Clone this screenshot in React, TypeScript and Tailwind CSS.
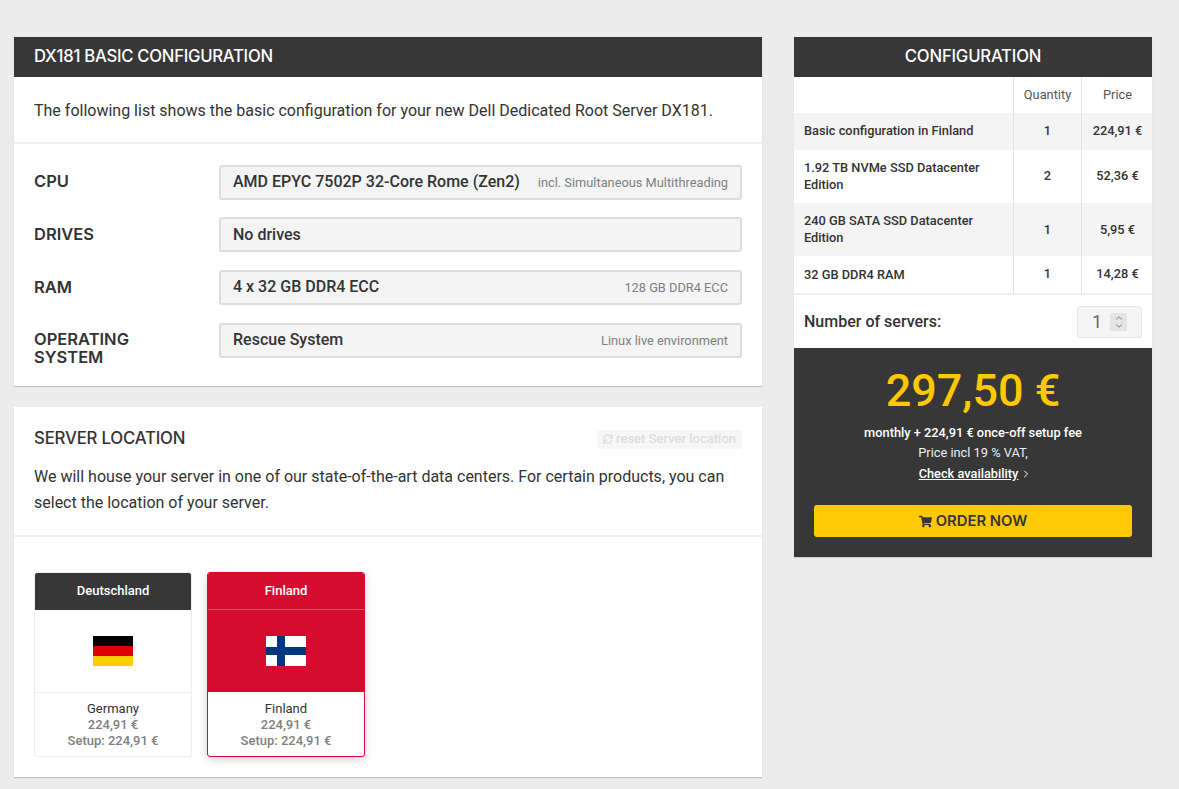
import { ChevronDown, ChevronRight, ChevronUp } from "lucide-react";
import { FaShoppingCart, FaSync } from "react-icons/fa";

const heading = "font-['Inter','Liberation_Sans',sans-serif]";

const specs = [
  { label: ["CPU"], value: "AMD EPYC 7502P 32-Core Rome (Zen2)", note: "incl. Simultaneous Multithreading" },
  { label: ["DRIVES"], value: "No drives", note: "" },
  { label: ["RAM"], value: "4 x 32 GB DDR4 ECC", note: "128 GB DDR4 ECC" },
  { label: ["OPERATING", "SYSTEM"], value: "Rescue System", note: "Linux live environment" },
];

const lines = [
  { name: "Basic configuration in Finland", qty: "1", price: "224,91 €", height: "h-[37px]", namePad: "pb-[2px]", cellPad: "pb-[2px]", shaded: true },
  { name: "1.92 TB NVMe SSD Datacenter Edition", qty: "2", price: "52,36 €", height: "h-[53px]", namePad: "pb-[1px]", cellPad: "pb-[1px]", shaded: false },
  { name: "240 GB SATA SSD Datacenter Edition", qty: "1", price: "5,95 €", height: "h-[53px]", namePad: "pb-[1px]", cellPad: "pb-0", shaded: true },
  { name: "32 GB DDR4 RAM", qty: "1", price: "14,28 €", height: "h-[37px]", namePad: "pb-[1px]", cellPad: "pb-[1px]", shaded: false },
];

const GermanFlag = () => (
  <svg width="40" height="30" viewBox="0 0 40 30" aria-hidden="true">
    <rect width="40" height="10" fill="#000000" />
    <rect y="10" width="40" height="10" fill="#dd0000" />
    <rect y="20" width="40" height="10" fill="#ffce00" />
  </svg>
);

const FinnishFlag = () => (
  <svg width="40" height="30" viewBox="0 0 40 30" aria-hidden="true">
    <rect width="40" height="30" fill="#ffffff" />
    <rect x="11" width="8" height="30" fill="#003580" />
    <rect y="11" width="40" height="8" fill="#003580" />
  </svg>
);

const App = () => {
  return (
    <div className="flex h-[789px] items-start gap-8 overflow-hidden bg-[#ececec] pt-[37px] pl-[14px] font-['Roboto',sans-serif] text-[#333333]">
      <div className="flex w-[748px] flex-col gap-[21px]">
        <section className="h-[349px] bg-white shadow-[0_1px_1px_rgba(0,0,0,0.18)]">
          <h2 className={`flex h-10 items-center bg-[#373737] px-5 text-[16.7px] font-medium tracking-[-0.27px] text-white ${heading}`}>
            DX181 BASIC CONFIGURATION
          </h2>
          <p className="flex h-[67px] items-center border-b-2 border-[#eeeeee] px-5 pt-[2px] text-base">
            The following list shows the basic configuration for your new Dell Dedicated Root Server DX181.
          </p>
          <div className="flex flex-col gap-[17.67px] px-5 pt-[20.67px]">
            {specs.map((spec) => (
              <div key={spec.value} className="flex h-[35px] items-start">
                <div className={`flex w-[185px] shrink-0 flex-col pt-[7.6px] text-[16.5px] leading-[18px] font-semibold text-[#333333] ${heading}`}>
                  {spec.label.map((part) => (
                    <span key={part}>{part}</span>
                  ))}
                </div>
                <div className="flex h-[35px] flex-1 items-center justify-between rounded-[3px] border-2 border-[#dddddd] bg-[#f4f4f4] px-3">
                  <span className="text-base font-medium">{spec.value}</span>
                  <span className="text-[12.8px] text-[#808080]">{spec.note}</span>
                </div>
              </div>
            ))}
          </div>
        </section>

        <section className="h-[370px] bg-white shadow-[0_1px_1px_rgba(0,0,0,0.18)]">
          <div className="h-[130px] border-b-2 border-[#eeeeee] px-5 pt-[22px]">
            <div className="flex h-5 items-center justify-between">
              <h2 className={`text-[16.8px] font-medium tracking-[-0.2px] ${heading}`}>SERVER LOCATION</h2>
              <span className="flex h-[19px] w-[145px] items-center justify-center gap-[3px] rounded-[3px] bg-[#f6f6f6] text-[13px] font-medium text-[#dddddd]">
                <FaSync className="h-[10px] w-[10px]" aria-hidden="true" />
                reset Server location
              </span>
            </div>
            <p className="mt-[15px] text-base leading-[26px]">
              We will house your server in one of our state-of-the-art data centers. For certain products, you can select the location of your server.
            </p>
          </div>
          <div className="flex gap-[15px] px-5 pt-[35px]">
            <div className="h-[185px] w-[158px] overflow-hidden rounded-[3px] border border-[#eeeeee] text-center">
              <div className="flex h-[37px] items-center justify-center bg-[#373737] pb-[1px] text-[13px] font-medium text-white">Deutschland</div>
              <div className="flex h-[83px] items-center justify-center border-b border-[#eeeeee] pb-[1px]">
                <GermanFlag />
              </div>
              <div className="pt-2 text-[13px] leading-4">
                <div>Germany</div>
                <div className="font-medium text-[#808080]">224,91 €</div>
                <div className="font-medium text-[#808080]">Setup: 224,91 €</div>
              </div>
            </div>
            <div className="h-[185px] w-[158px] overflow-hidden rounded-[3px] border border-[#d50c2d] text-center shadow-[0_3px_10px_rgba(0,0,0,0.16)]">
              <div className="flex h-[37px] items-center justify-center border-b border-[#e04a60] bg-[#d50c2d] text-[13px] font-medium text-white">Finland</div>
              <div className="flex h-[82px] items-center justify-center bg-[#d50c2d]">
                <FinnishFlag />
              </div>
              <div className="pt-[9px] text-[13px] leading-4">
                <div>Finland</div>
                <div className="font-medium text-[#808080]">224,91 €</div>
                <div className="font-medium text-[#808080]">Setup: 224,91 €</div>
              </div>
            </div>
          </div>
        </section>
      </div>

      <aside className="w-[358px] bg-white shadow-[0_1px_1px_rgba(0,0,0,0.12)]">
        <h2 className={`flex h-10 items-center justify-center bg-[#373737] text-[16.7px] font-medium tracking-[-0.2px] text-white ${heading}`}>
          CONFIGURATION
        </h2>
        <div className="grid h-[36px] grid-cols-[219px_69px_70px] text-center text-[12.8px] text-[#555555]">
          <div />
          <div className="flex items-center justify-center border-x border-[#e4e4e4]">Quantity</div>
          <div className="flex items-center justify-center pl-[1px]">Price</div>
        </div>
        {lines.map((line) => (
          <div
            key={line.name}
            className={`grid grid-cols-[219px_69px_70px] text-[12.8px] font-medium ${line.height} ${line.shaded ? "bg-[#f4f4f4]" : "bg-white"}`}
          >
            <div className={`flex items-center pr-4 pl-[10px] leading-[17px] ${line.namePad}`}>{line.name}</div>
            <div className={`flex items-center justify-center border-x border-[#e4e4e4] ${line.cellPad}`}>{line.qty}</div>
            <div className={`flex items-center justify-center pl-[1px] ${line.cellPad}`}>{line.price}</div>
          </div>
        ))}
        <div className="flex h-[55px] items-center justify-between border-t-2 border-[#eeeeee] px-[10px]">
          <span className="text-base font-medium">Number of servers:</span>
          <div className="flex h-[32px] w-[65px] items-center justify-end gap-[8px] rounded-[3px] border border-[#e6e6e6] bg-[#f5f5f5] pr-[14px] text-lg text-[#666666]">
            <span>1</span>
            <span className="flex h-[18px] w-[17px] flex-col items-center justify-center bg-[#e4e4e6] text-[#666666]">
              <ChevronUp className="-mb-[1px] h-[10px] w-[10px]" strokeWidth={2} aria-hidden="true" />
              <ChevronDown className="-mt-[1px] h-[10px] w-[10px]" strokeWidth={2} aria-hidden="true" />
            </span>
          </div>
        </div>
        <div className="h-[209px] bg-[#373737] px-5 pt-4 text-center text-white">
          <div className="text-[45px] leading-[54px] font-medium text-[#ffc800]">297,50 €</div>
          <div className="mt-[5px] text-[12.8px] leading-[19px] font-medium">monthly + 224,91 € once-off setup fee</div>
          <div className="text-[12.8px] leading-[21px] text-[#eeeeee]">Price incl 19 % VAT,</div>
          <div className="flex items-center justify-center gap-[2px] pl-[5px] text-[12.8px] leading-[21px] font-medium">
            <span className="underline">Check availability</span>
            <ChevronRight className="h-3 w-3" strokeWidth={2} aria-hidden="true" />
          </div>
          <button className={`mt-[21px] flex h-[32px] w-full items-center justify-center gap-1 rounded-[3px] bg-[#ffc800] text-[14.8px] font-semibold text-[#373737] ${heading}`}>
            <FaShoppingCart className="h-[13px] w-[13px]" aria-hidden="true" />
            ORDER NOW
          </button>
        </div>
      </aside>
    </div>
  );
};

export default App;
